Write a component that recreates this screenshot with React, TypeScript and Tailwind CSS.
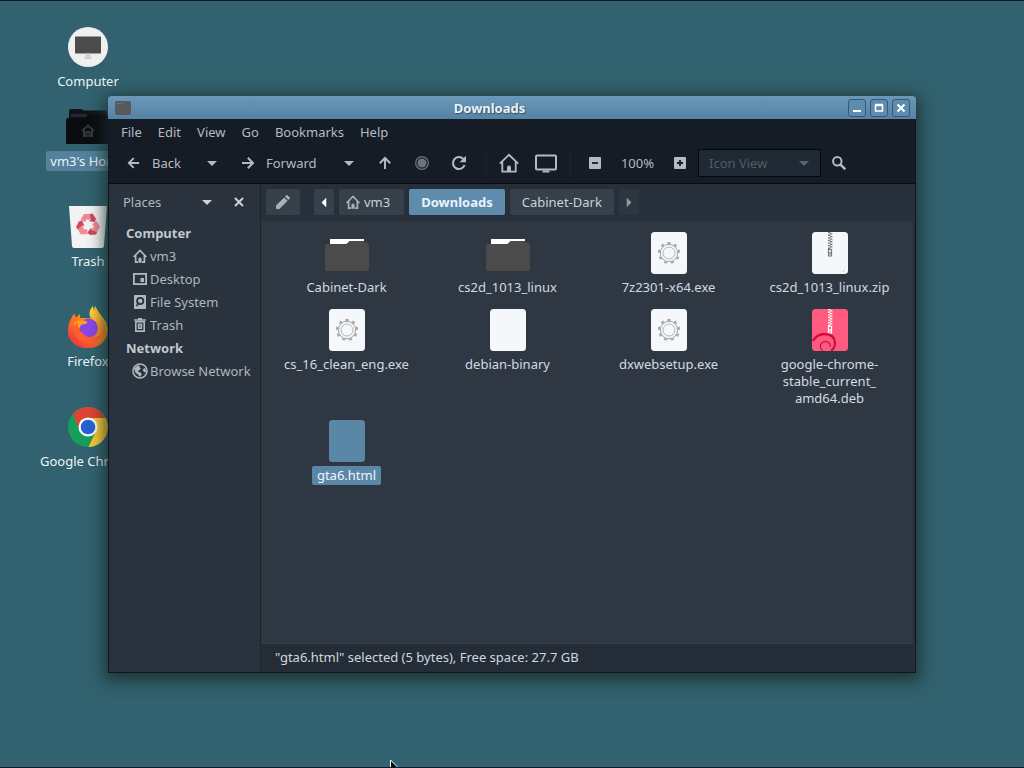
import type { ReactNode } from 'react';
import clsx from 'clsx';

type FileKind = 'folder' | 'exe' | 'zip' | 'deb' | 'blank' | 'selected';

interface FileEntry {
  name: string;
  lines?: string[];
  kind: FileKind;
}

const files: FileEntry[] = [
  { name: 'Cabinet-Dark', kind: 'folder' },
  { name: 'cs2d_1013_linux', kind: 'folder' },
  { name: '7z2301-x64.exe', kind: 'exe' },
  { name: 'cs2d_1013_linux.zip', kind: 'zip' },
  { name: 'cs_16_clean_eng.exe', kind: 'exe' },
  { name: 'debian-binary', kind: 'blank' },
  { name: 'dxwebsetup.exe', kind: 'exe' },
  { name: 'deb', lines: ['google-chrome-', 'stable_current_', 'amd64.deb'], kind: 'deb' },
  { name: 'gta6.html', kind: 'selected' },
];

const menus = ['File', 'Edit', 'View', 'Go', 'Bookmarks', 'Help'];

/* ---------- symbolic icons ---------- */

function Caret({ className }: { className?: string }) {
  return (
    <svg viewBox="0 0 10 5" className={clsx('h-[5px] w-[10px]', className)} fill="currentColor">
      <path d="M0 0h10L5 5z" />
    </svg>
  );
}

function Arrow({ className }: { className?: string }) {
  return (
    <svg viewBox="0 0 14 14" className={clsx('h-3.5 w-3.5', className)} fill="none" stroke="currentColor" strokeWidth="2">
      <path d="M13 7H2M7.2 1.8 2 7l5.2 5.2" />
    </svg>
  );
}

function HouseIcon({ className }: { className?: string }) {
  return (
    <svg viewBox="0 0 14 14" className={className} fill="none" stroke="currentColor" strokeWidth="1.7">
      <path d="M.6 8 7 1.5 13.4 8M2.6 6.5v6.7H5M11.4 6.5v6.7H9" />
      <path d="M5.4 13.8V10a1.6 1.6 0 0 1 3.2 0v3.8z" fill="currentColor" stroke="none" />
    </svg>
  );
}

function BigHouseIcon() {
  return (
    <svg viewBox="0 0 20 20" className="h-5 w-5" fill="none" stroke="currentColor" strokeWidth="1.8">
      <path d="M.8 10.6 10 1.8l9.2 8.8M3.3 8.6v10h13.4v-10" />
      <path d="M8 19v-4.6a2 2 0 0 1 4 0V19z" fill="currentColor" stroke="none" />
    </svg>
  );
}

function MonitorIcon() {
  return (
    <svg viewBox="0 0 22 19" className="h-[19px] w-[22px]" fill="none" stroke="currentColor" strokeWidth="2">
      <rect x="1" y="1.5" width="20" height="14" rx="1" />
      <path d="M7.5 17.5h7" />
    </svg>
  );
}

function RecordIcon() {
  return (
    <svg viewBox="0 0 14 14" className="h-3.5 w-3.5">
      <circle cx="7" cy="7" r="6.3" fill="none" stroke="currentColor" strokeWidth="1.3" />
      <circle cx="7" cy="7" r="4.5" fill="currentColor" />
    </svg>
  );
}

function ReloadIcon() {
  return (
    <svg viewBox="0 0 16 16" className="h-4 w-4" fill="none" stroke="currentColor" strokeWidth="2.1">
      <path d="M13.6 10A6 6 0 1 1 12.4 4" />
      <path d="M15 .8v6.4H8.6z" fill="currentColor" stroke="none" />
    </svg>
  );
}

function ZoomBox({ plus }: { plus?: boolean }) {
  return (
    <svg viewBox="0 0 12 12" className="h-3 w-3">
      <rect width="12" height="12" rx="1" fill="currentColor" />
      <path d={plus ? 'M3 6h6M6 3v6' : 'M3 6h6'} stroke="#151c26" strokeWidth="1.8" />
    </svg>
  );
}

function SearchIcon() {
  return (
    <svg viewBox="0 0 14 14" className="h-3.5 w-3.5" fill="none" stroke="currentColor" strokeWidth="2">
      <circle cx="5.3" cy="5.3" r="4.2" />
      <path d="m8.3 8.3 5 5" strokeWidth="2.4" />
    </svg>
  );
}

function PencilIcon() {
  return (
    <svg viewBox="0 0 14 14" className="h-3.5 w-3.5" fill="currentColor">
      <path d="M0 14v-3.4L8.2 2.4l3.4 3.4L3.4 14zM9 1.6l1.3-1.3q.6-.6 1.2 0l2.2 2.2q.6.6 0 1.2L12.4 5z" />
    </svg>
  );
}

function DesktopIcon() {
  return (
    <svg viewBox="0 0 14 12" className="h-3 w-3.5">
      <rect x=".9" y=".9" width="12.2" height="10.2" fill="none" stroke="currentColor" strokeWidth="1.8" />
      <rect x="7.5" y="5" width="3.5" height="4" fill="currentColor" />
    </svg>
  );
}

function DriveIcon() {
  return (
    <svg viewBox="0 0 12 14" className="h-3.5 w-3">
      <rect width="12" height="14" rx=".6" fill="currentColor" />
      <circle cx="6.2" cy="6" r="3.2" fill="none" stroke="#29323d" strokeWidth="1.7" />
      <path d="m5 7.500-2.600 3.600" stroke="#29323d" strokeWidth="1.6" />
    </svg>
  );
}

function BinIcon() {
  return (
    <svg viewBox="0 0 12 14" className="h-3.5 w-3" fill="none" stroke="currentColor">
      <path d="M0 2h12M4 .7h4" strokeWidth="1.5" />
      <path d="M1.8 3.8v9.3h8.4V3.8z" strokeWidth="1.6" />
      <path d="M6 5.4v5.4M4.4 10.4h3.2V6H4.4z" strokeWidth="1.2" />
    </svg>
  );
}

function GlobeIcon() {
  return (
    <svg viewBox="0 0 16 16" className="h-4 w-4">
      <circle cx="8" cy="8" r="7" fill="none" stroke="currentColor" strokeWidth="1.6" />
      <path d="M2 5.5 5 3l3-.8-.6 2L9 5.4 7 7.2 5.8 9l3 .6 1 1.8-2 2.6L6 11.6 3.5 9.8zM10.6 6.4l2.6-1.6 1 3.6-2 1.2z" fill="currentColor" />
    </svg>
  );
}

/* ---------- desktop icons ---------- */

function ComputerIcon() {
  return (
    <svg viewBox="0 0 40 40" className="h-10 w-10">
      <circle cx="20" cy="20" r="20" fill="#efefef" />
      <rect x="7" y="9.5" width="26" height="17" rx=".8" fill="#4b4b4b" />
      <path d="M17.5 26.5h5V30h1.5v2h-8v-2h1.5z" fill="#d2d2d2" />
    </svg>
  );
}

function HomeFolderIcon() {
  return (
    <svg viewBox="0 0 46 40" className="h-10 w-[46px]">
      <path d="M4 4q0-2 2-2h10q2 0 3 1.500h21q2 0 2 2V20H4z" fill="#10141a" />
      <path d="M6 7h16v3H6z" fill="#23272e" />
      <path d="M1 13q0-2 2-2h16q2 0 3-1.500L24 8h17q4 0 4 4v25H1z" fill="#0a0c10" />
      <path d="m17 24 6-5.500 6 5.500M19 23v6h2.500v-4h3v4H27v-6" fill="none" stroke="#33363b" strokeWidth="2" />
    </svg>
  );
}

function TrashCanIcon() {
  return (
    <svg viewBox="0 0 40 42" className="h-[42px] w-10">
      <path d="M1 0h38l-3 40q-.2 2-2 2H6q-1.800 0-2-2z" fill="#f3f3f3" />
      <g transform="translate(3 1) scale(.86)">
        {[0, 120, 240].map((angle) => (
          <g key={angle} transform={`rotate(${angle} 20 21)`}>
            <path d="m11 15 4-7h8l2.500 4-5 3-2-1-2 3.500z" fill="#ef8a95" />
            <path d="m22 8 3-.5 4 6-1 4-7-1 1.800-2z" fill="#cf4a5c" />
          </g>
        ))}
      </g>
    </svg>
  );
}

function FirefoxIcon() {
  return (
    <svg viewBox="0 0 42 42" className="h-[42px] w-[42px]">
      <defs>
        <linearGradient id="ff-body" x1="0.85" y1="0.1" x2="0.2" y2="0.95">
          <stop offset="0" stopColor="#ffcf3a" />
          <stop offset="0.4" stopColor="#ff8a1e" />
          <stop offset="1" stopColor="#f0373f" />
        </linearGradient>
        <linearGradient id="ff-tail" x1="0.3" y1="0" x2="0.7" y2="1">
          <stop offset="0" stopColor="#ffd93f" />
          <stop offset="1" stopColor="#ff7a22" />
        </linearGradient>
      </defs>
      <path d="M5 11 7 7.500l2 4 4-3.500v4l12 0 3-12 5 8 6 8q3 7 1 14-5 12-19 12.500Q6 42 1.500 30-.5 19 5 11z" fill="url(#ff-body)" />
      <circle cx="21.500" cy="22" r="9.500" fill="#8a45e8" />
      <path d="M7 16q6-3 12-1 2 1 1 2.500l-6 1.500-2 4q-5-1-5-7z" fill="#ff9f22" />
      <path d="M26 0q-5 5-3 11l6 5q4 6 0 14l-5 4q9 1 13-7 3-9-3-16l-6-5q-2-3-2-6z" fill="url(#ff-tail)" />
      <path d="M10 16q2 14 16 16l8-3q-5 9-15 8Q8 35 7 22z" fill="#ff5f2a" />
    </svg>
  );
}

function ChromeIcon() {
  return (
    <svg viewBox="0 0 40 40" className="h-10 w-10">
      <circle cx="20" cy="20" r="20" fill="#159f58" />
      <path d="M20 11h17.900A20 20 0 0 1 20.500 40l7.300-15.500z" fill="#fcc934" />
      <path d="M4.800 7A20 20 0 0 1 37.900 11H20l-7.800 13.500L4.800 7z" fill="#de4433" />
      <circle cx="20" cy="20" r="9.500" fill="#fff" />
      <circle cx="20" cy="20" r="7.300" fill="#2463d4" />
    </svg>
  );
}

const desktopItems: { label: string; icon: ReactNode; selected?: boolean }[] = [
  { label: 'Computer', icon: <ComputerIcon /> },
  { label: "vm3's Home", icon: <HomeFolderIcon />, selected: true },
  { label: 'Trash', icon: <TrashCanIcon /> },
  { label: 'Firefox', icon: <FirefoxIcon /> },
  { label: 'Google Chrome', icon: <ChromeIcon /> },
];

/* ---------- file icons ---------- */

const teeth = [0, 40, 80, 120, 160, 200, 240, 280, 320];

function FileIcon({ kind }: { kind: FileKind }) {
  if (kind === 'folder') {
    return (
      <svg viewBox="0 0 46 42" className="h-[42px] w-[46px]">
        <path d="M6 7h34v6H6z" fill="#fff" />
        <path d="M1 14q0-2 2-2h18q2 0 3-1.500L25.500 9H40l1 1.500h2q2 1 2 3V37q0 2-2 2H3q-2 0-2-2z" fill="#4b4b4b" />
      </svg>
    );
  }
  const fill = kind === 'deb' ? '#ff5a7f' : kind === 'selected' ? '#5b87a7' : '#f5f8fa';
  return (
    <svg viewBox="0 0 36 42" className="h-[42px] w-9">
      <rect width="36" height="42" rx="3.500" fill={fill} />
      {kind === 'exe' && (
        <g fill="none" stroke="#a3a3a3">
          <circle cx="18" cy="21" r="8.700" />
          <circle cx="18" cy="21" r="6" strokeWidth=".8" />
          {teeth.map((angle) => (
            <path key={angle} d="M16.500 11h3" strokeWidth="2" transform={`rotate(${angle} 18 21)`} />
          ))}
        </g>
      )}
      {(kind === 'zip' || kind === 'deb') && (
        <g stroke={kind === 'zip' ? '#777' : '#fff'} fill="none">
          <path d="M17.200 0v17" strokeWidth="2.400" strokeDasharray="1.300 1.300" />
          <path d="M19.200 1.300v16" strokeWidth="2.400" strokeDasharray="1.300 1.300" />
          <path d="M16.500 17.500h3v6.500h-3zM18 20v2.500" strokeWidth="1.200" />
        </g>
      )}
      {kind === 'zip' && <path d="m29 40 4-3v3z" fill="#dde1e6" />}
      {kind === 'deb' && (
        <g fill="none" stroke="#cc0e46">
          <path d="M1 32Q5 25 12.500 25q10 0 10.500 9 0 5-4 8" strokeWidth="2.300" />
          <path d="M11 42q-4-3-2-7 3-4 7-2 3 2 2 5" strokeWidth="1.200" />
        </g>
      )}
    </svg>
  );
}

/* ---------- window parts ---------- */

function TitleButton({ label, children }: { label: string; children: ReactNode }) {
  return (
    <button
      aria-label={label}
      className="flex h-[18px] w-[18px] items-center justify-center rounded-[3px] border border-[#33587a] bg-[#5f8bad] text-white"
    >
      <svg viewBox="0 0 12 12" className="h-3 w-3" fill="none" stroke="currentColor" strokeWidth="2">
        {children}
      </svg>
    </button>
  );
}

function TitleBar() {
  return (
    <header className="flex h-[23px] items-center rounded-t bg-linear-to-b from-[#6b97b8] to-[#5682a3] pr-1.5 pl-[7px]">
      <svg viewBox="0 0 16 14" className="h-3.5 w-4">
        <path d="M0 2q0-2 2-2h12q2 0 2 2v10q0 2-2 2H2q-2 0-2-2z" fill="#555a5e" />
        <path d="M1 2.500h6l1-1.500" stroke="#6c7276" fill="none" />
      </svg>
      <h1 className="flex-1 text-center font-bold text-[#eaf2f8] [text-shadow:1px_1px_1px_#2f5470]">Downloads</h1>
      <div className="flex gap-1">
        <TitleButton label="Minimize">
          <path d="M2 9h8" />
        </TitleButton>
        <TitleButton label="Maximize">
          <path d="M2.500 3.500h7v5.500h-7zM2 2.500h8" strokeWidth="1.500" />
        </TitleButton>
        <TitleButton label="Close">
          <path d="m2.500 2.500 7 7M9.500 2.500l-7 7" />
        </TitleButton>
      </div>
    </header>
  );
}

function ToolButton({ label, className, children }: { label?: string; className?: string; children: ReactNode }) {
  return (
    <button aria-label={label} className={clsx('flex h-7 items-center justify-center', className)}>
      {children}
    </button>
  );
}

function Toolbar() {
  return (
    <div className="flex h-10 items-center border-b border-[#080c12] pb-px text-[#b4bbc0]">
      <ToolButton className="ml-[18px] w-[54px] justify-start gap-3">
        <Arrow />
        Back
      </ToolButton>
      <ToolButton label="Back history" className="ml-[13px] w-9">
        <Caret />
      </ToolButton>
      <ToolButton className="ml-[11px] w-[78px] justify-start gap-[11px]">
        <Arrow className="rotate-180" />
        Forward
      </ToolButton>
      <ToolButton label="Forward history" className="ml-3 w-9">
        <Caret />
      </ToolButton>
      <ToolButton label="Up" className="w-9">
        <Arrow className="rotate-90" />
      </ToolButton>
      <ToolButton label="Stop" className="w-[38px] text-[#6d7379]">
        <RecordIcon />
      </ToolButton>
      <ToolButton label="Reload" className="w-9">
        <ReloadIcon />
      </ToolButton>
      <span className="ml-[9px] h-7 w-px bg-[#1b232e]" />
      <ToolButton label="Home" className="ml-1 w-9">
        <BigHouseIcon />
      </ToolButton>
      <ToolButton label="Computer" className="w-[38px]">
        <MonitorIcon />
      </ToolButton>
      <span className="ml-[5px] h-7 w-px bg-[#1b232e]" />
      <ToolButton label="Zoom out" className="ml-1.5 w-9">
        <ZoomBox />
      </ToolButton>
      <ToolButton className="w-[49px]">100%</ToolButton>
      <ToolButton label="Zoom in" className="w-9">
        <ZoomBox plus />
      </ToolButton>
      <div className="relative w-[123px]">
        <select
          aria-label="View mode"
          disabled
          className="h-7 w-full appearance-none border border-[#05080c] bg-[#1e2933] pl-2.5 text-[#4f5d68] opacity-100"
        >
          <option>Icon View</option>
        </select>
        <Caret className="pointer-events-none absolute top-3 right-3 text-[#59656e]" />
      </div>
      <ToolButton label="Search" className="w-9">
        <SearchIcon />
      </ToolButton>
    </div>
  );
}

function PlaceRow({ icon, label }: { icon: ReactNode; label: string }) {
  return (
    <li>
      <a href="#" className="flex h-[23px] items-center gap-0.5 pl-[23px]">
        <span className="flex w-4 justify-center">{icon}</span>
        {label}
      </a>
    </li>
  );
}

function Sidebar() {
  return (
    <aside className="w-[152px] shrink-0 border-r border-[#1a222b] bg-[#29323d] text-[#aeb8be]">
      <div className="flex h-9 items-center pl-3.5">
        <button className="flex w-[89px] items-center justify-between text-left">
          Places
          <Caret className="text-[#ccd3d8]" />
        </button>
        <button aria-label="Close side pane" className="ml-[22px] text-[#ccd3d8]">
          <svg viewBox="0 0 10 10" className="h-2.5 w-2.5" stroke="currentColor" strokeWidth="2">
            <path d="m1 1 8 8M9 1 1 9" />
          </svg>
        </button>
      </div>
      <h2 className="h-6 pl-[17px] leading-[26px] font-bold text-[#c0c9cf]">Computer</h2>
      <ul>
        <PlaceRow icon={<HouseIcon className="h-3.5 w-3.5" />} label="vm3" />
        <PlaceRow icon={<DesktopIcon />} label="Desktop" />
        <PlaceRow icon={<DriveIcon />} label="File System" />
        <PlaceRow icon={<BinIcon />} label="Trash" />
      </ul>
      <h2 className="h-[23px] pl-[17px] leading-6 font-bold text-[#c0c9cf]">Network</h2>
      <ul>
        <PlaceRow icon={<GlobeIcon />} label="Browse Network" />
      </ul>
    </aside>
  );
}

function PathBar() {
  const crumb = 'flex h-[26px] items-center justify-center rounded-xs bg-[#35404b]';
  return (
    <nav className="flex h-[37px] items-center gap-[5px] border-b border-[#27313b] bg-[#262f3a] pl-[5px] text-[#c9d3da]">
      <button aria-label="Edit location" className={clsx(crumb, 'mr-[9px] w-[34px] text-[#a9b1b7]')}>
        <PencilIcon />
      </button>
      <button aria-label="Scroll left" className={clsx(crumb, 'w-5 text-white')}>
        <Caret className="rotate-90" />
      </button>
      <button className={clsx(crumb, 'gap-1 px-[7px] pr-3.5')}>
        <HouseIcon className="h-3.5 w-3.5 text-[#a9b1b7]" />
        vm3
      </button>
      <button className={clsx(crumb, 'bg-[#5f8bad]! px-3 font-bold text-[#e9f3fa]')}>Downloads</button>
      <button className={clsx(crumb, 'px-3')}>Cabinet-Dark</button>
      <button aria-label="Scroll right" className={clsx(crumb, 'w-5 bg-[#2c3641]! text-[#8d979e]')}>
        <Caret className="-rotate-90" />
      </button>
    </nav>
  );
}

function FileItem({ file }: { file: FileEntry }) {
  return (
    <button className="flex flex-col items-center self-start">
      <FileIcon kind={file.kind} />
      <span
        className={clsx(
          'mt-1 rounded-xs px-[5px] py-px leading-[17px]',
          file.kind === 'selected' && 'bg-[#5b87a7] text-[#eef6fb]',
        )}
      >
        {file.lines
          ? file.lines.map((line) => (
              <span key={line} className="block">
                {line}
              </span>
            ))
          : file.name}
      </span>
    </button>
  );
}

export default function App() {
  return (
    <div className="relative h-screen overflow-hidden border-y border-[#0b1a2c] bg-[#32626f] font-['Noto_Sans',sans-serif] text-[13px] leading-5">
      <main className="absolute top-[26px] left-7 flex w-[120px] flex-col items-center text-[#eef4f6] [text-shadow:1px_1px_1px_#10242c]">
        {desktopItems.map((item, i) => (
          <button key={item.label} className={clsx('flex flex-col items-center', i === 0 ? 'h-20' : 'h-[100px]')}>
            <span className="flex h-10 items-center">{item.icon}</span>
            <span className={clsx('mt-1 rounded-xs px-1', item.selected && 'bg-[#54819b]')}>{item.label}</span>
          </button>
        ))}
      </main>

      <section className="absolute inset-x-[108px] top-[95px] bottom-[94px] flex flex-col rounded-t shadow-[0_4px_16px_4px_rgba(25,45,40,0.8)]">
        <TitleBar />
        <div className="flex min-h-0 flex-1 flex-col border-x border-b border-[#0e1721] bg-[#151c26]">
          <nav className="flex h-[25px] items-center pl-1 text-[#b4bbc0]">
            {menus.map((menu) => (
              <button key={menu} className="px-2">
                {menu}
              </button>
            ))}
          </nav>
          <Toolbar />
          <div className="flex min-h-0 flex-1 bg-[#262f3a] pr-0.5">
            <Sidebar />
            <div className="flex min-w-0 flex-1 flex-col">
              <PathBar />
              <div className="grid flex-1 grid-cols-4 content-start gap-y-3 bg-[#2f3742] pt-[11px] pr-[3px] pl-[5px] text-[#cfdbe3]">
                {files.map((file) => (
                  <FileItem key={file.name} file={file} />
                ))}
              </div>
              <footer className="h-[29px] border-t border-[#333e49] bg-[#242c37] pl-3.5 leading-[26px] text-[#cfd8de]">
                "gta6.html" selected (5 bytes), Free space: 27.7 GB
              </footer>
            </div>
          </div>
        </div>
      </section>

      {/* gap in the auto-hidden panel edge */}
      <span className="absolute right-[116px] -bottom-px h-px w-8 bg-[#32626f]" />

      {/* mouse pointer */}
      <svg viewBox="0 0 12 18" className="pointer-events-none absolute -bottom-2.5 left-[390px] h-[18px] w-3">
        <path d="M.5 1v15l3.500-3 2 4.500 2.500-1-2-4.500h5z" fill="#05080c" stroke="#fff" />
      </svg>
    </div>
  );
}
